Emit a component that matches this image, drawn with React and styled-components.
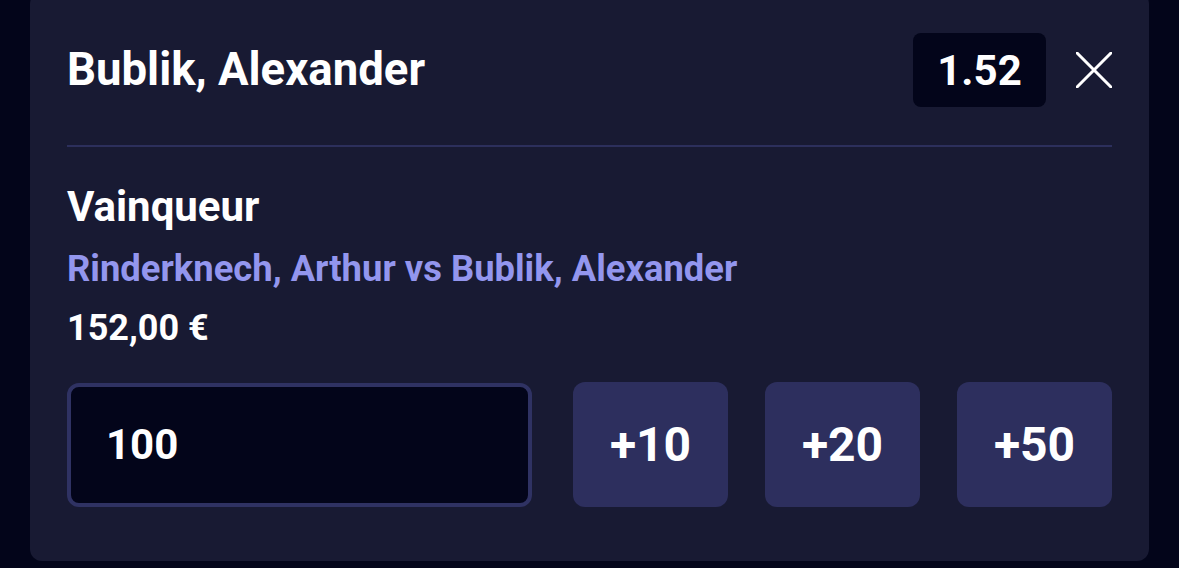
import React from "react";
import styled, { createGlobalStyle } from "styled-components";

const Global = createGlobalStyle`
  html, body {
    margin: 0;
    padding: 0;
    background: #03051a;
    font-family: Roboto, "Noto Sans", sans-serif;
    color: #fff;
  }
`;

const Page = styled.div`
  height: 568px;
  padding: 0 30px;
  overflow: hidden;
`;

const Card = styled.div`
  margin-top: -8px;
  height: 569px;
  box-sizing: border-box;
  background: #181a33;
  border-radius: 12px;
  padding: 41px 37px 0;
  display: flex;
  flex-direction: column;
`;

const Header = styled.div`
  height: 74px;
  display: flex;
  align-items: center;
`;

const Title = styled.h1`
  flex: 1;
  margin: 0;
  font-size: 45.5px;
  font-weight: 700;
  line-height: 1;
`;

const Odds = styled.div`
  width: 133px;
  height: 74px;
  border-radius: 8px;
  background: #03051a;
  display: flex;
  align-items: center;
  justify-content: center;
  font-size: 42px;
  font-weight: 700;
`;

const Close = styled.button`
  margin-left: 30px;
  width: 36px;
  height: 36px;
  padding: 0;
  border: 0;
  background: none;
  cursor: pointer;
  display: flex;
`;

const Divider = styled.hr`
  margin: 38px 0 0;
  border: 0;
  height: 2px;
  background: #2c2f5c;
`;

const Market = styled.div`
  margin-top: 36px;
  font-size: 42px;
  font-weight: 700;
  line-height: 48px;
`;

const Match = styled.div`
  margin-top: 16px;
  font-size: 36.4px;
  font-weight: 700;
  line-height: 44px;
  color: #9396ee;
`;

const Payout = styled.div`
  margin-top: 15px;
  font-size: 36px;
  font-weight: 700;
  line-height: 44px;
`;

const Controls = styled.div`
  margin-top: 32px;
  height: 125px;
  display: grid;
  grid-template-columns: 1fr 155px 155px 155px;
  column-gap: 37px;
`;

const Stake = styled.input`
  margin-right: 4px;
  min-width: 0;
  box-sizing: border-box;
  height: 124px;
  align-self: center;
  border: 4px solid #2f3263;
  border-radius: 12px;
  background: #03051a;
  color: #fff;
  padding: 0 0 0 35px;
  font-family: inherit;
  font-size: 42px;
  font-weight: 700;
  outline: none;
`;

const Quick = styled.button`
  border: 0;
  border-radius: 12px;
  background: #2d2f5e;
  color: #fff;
  font-family: inherit;
  font-size: 48px;
  font-weight: 700;
  cursor: pointer;
`;

const CloseIcon = () => (
  <svg width="36" height="36" viewBox="0 0 36 36">
    <path d="M1 1L35 35M35 1L1 35" stroke="#fff" strokeWidth="3" strokeLinecap="round" />
  </svg>
);

export default function App() {
  return (
    <Page>
      <Global />
      <Card>
        <Header>
          <Title>Bublik, Alexander</Title>
          <Odds>1.52</Odds>
          <Close aria-label="Fermer">
            <CloseIcon />
          </Close>
        </Header>
        <Divider />
        <Market>Vainqueur</Market>
        <Match>Rinderknech, Arthur vs Bublik, Alexander</Match>
        <Payout>152,00 €</Payout>
        <Controls>
          <Stake defaultValue="100" />
          {[10, 20, 50].map((v) => (
            <Quick key={v}>+{v}</Quick>
          ))}
        </Controls>
      </Card>
    </Page>
  );
}
